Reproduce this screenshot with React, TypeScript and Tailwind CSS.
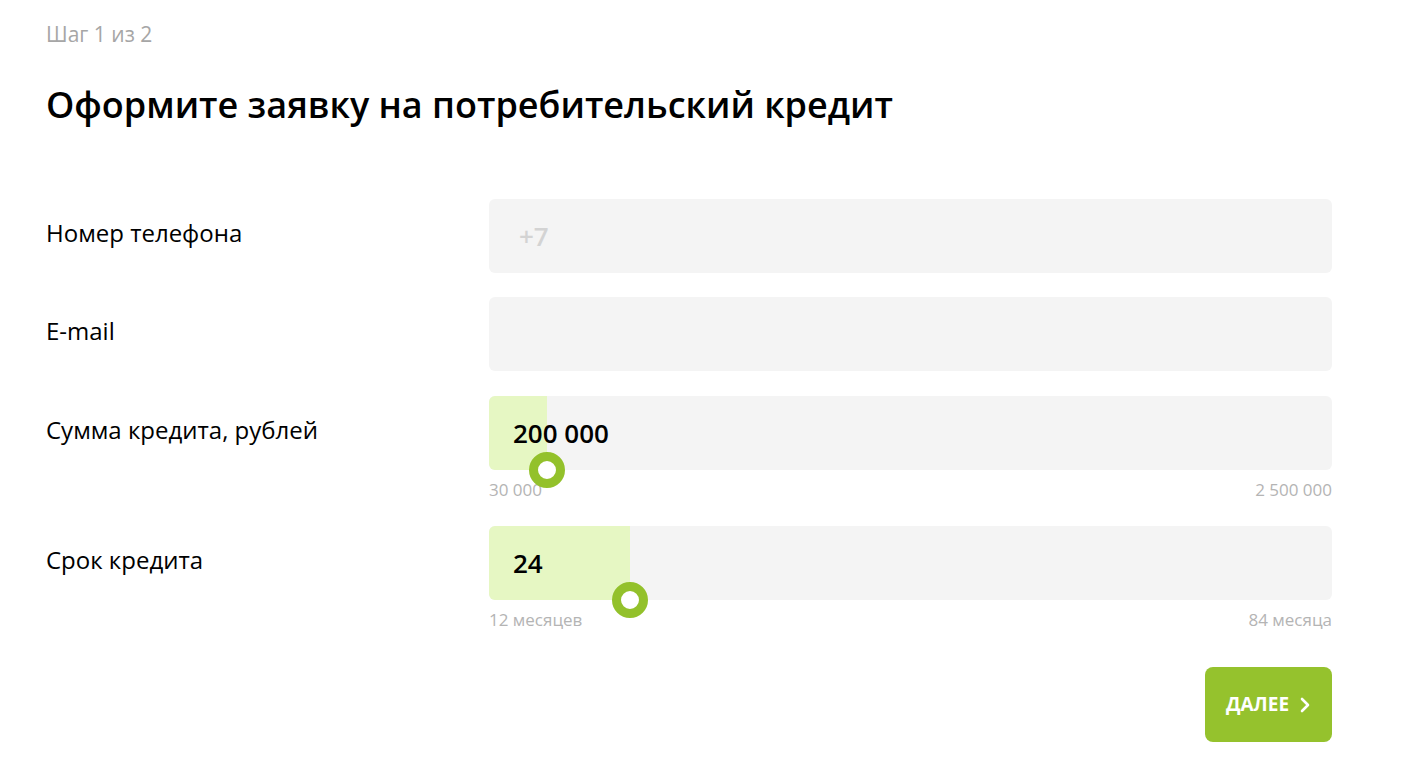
import React from "react";

const font = { fontFamily: '"Open Sans", "Noto Sans", sans-serif' };

function Slider({ value, pct, min, max }: { value: string; pct: number; min: string; max: string }) {
  return (
    <div>
      <div className="relative h-[74px] rounded-[6px] bg-[#f4f4f4]">
        <div className="absolute left-0 top-0 h-full rounded-l-[6px] bg-[#e6f7c3]" style={{ width: `${pct}px` }} />
        <div className="relative flex h-full items-center pl-[24px] text-[26px] font-semibold text-black">{value}</div>
        <div
          className="absolute bottom-[-18px] h-[36px] w-[36px] rounded-full border-[9px] border-[#93c12b] bg-white"
          style={{ left: `${pct - 18}px` }}
        />
      </div>
      <div className="mt-[10px] flex justify-between text-[17px] leading-[20px] text-[#b4b4b4]">
        <span>{min}</span>
        <span>{max}</span>
      </div>
    </div>
  );
}

export default function App() {
  return (
    <div className="min-h-[768px] bg-white pl-[46px] pr-[76px]" style={font}>
      <div className="pt-[20px] text-[21px] leading-[28px] text-[#a6a6a6]">Шаг 1 из 2</div>
      <h1 className="mt-[33px] text-[36px] font-semibold leading-[48px] text-black">
        Оформите заявку на потребительский кредит
      </h1>
      <div className="mt-[70px] grid grid-cols-[443px_1fr]">
        <div className="flex h-[74px] items-center pb-[6px] text-[24px] text-black">Номер телефона</div>
        <div className="flex h-[74px] items-center rounded-[6px] bg-[#f4f4f4] pl-[30px] text-[26px] font-semibold text-[#d3d3d3]">
          +7
        </div>

        <div className="mt-[24px] flex h-[74px] items-center pb-[6px] text-[24px] text-black">E-mail</div>
        <div className="mt-[24px] h-[74px] rounded-[6px] bg-[#f4f4f4]" />

        <div className="mt-[25px] flex h-[74px] items-center pb-[6px] text-[24px] text-black">Сумма кредита, рублей</div>
        <div className="mt-[25px]">
          <Slider value="200 000" pct={58} min="30 000" max="2 500 000" />
        </div>

        <div className="mt-[26px] flex h-[74px] items-center pb-[6px] text-[24px] text-black">Срок кредита</div>
        <div className="mt-[26px]">
          <Slider value="24" pct={141} min="12 месяцев" max="84 месяца" />
        </div>
      </div>
      <div className="mt-[37px] flex justify-end">
        <button className="flex h-[75px] w-[127px] items-center justify-center gap-[10px] rounded-[8px] bg-[#95c22d] text-[19px] font-bold text-white">
          ДАЛЕЕ
          <svg width="12" height="18" viewBox="0 0 12 18" fill="none">
            <path d="M3 3l6 6-6 6" stroke="white" strokeWidth="2.6" strokeLinecap="round" strokeLinejoin="round" />
          </svg>
        </button>
      </div>
    </div>
  );
}
